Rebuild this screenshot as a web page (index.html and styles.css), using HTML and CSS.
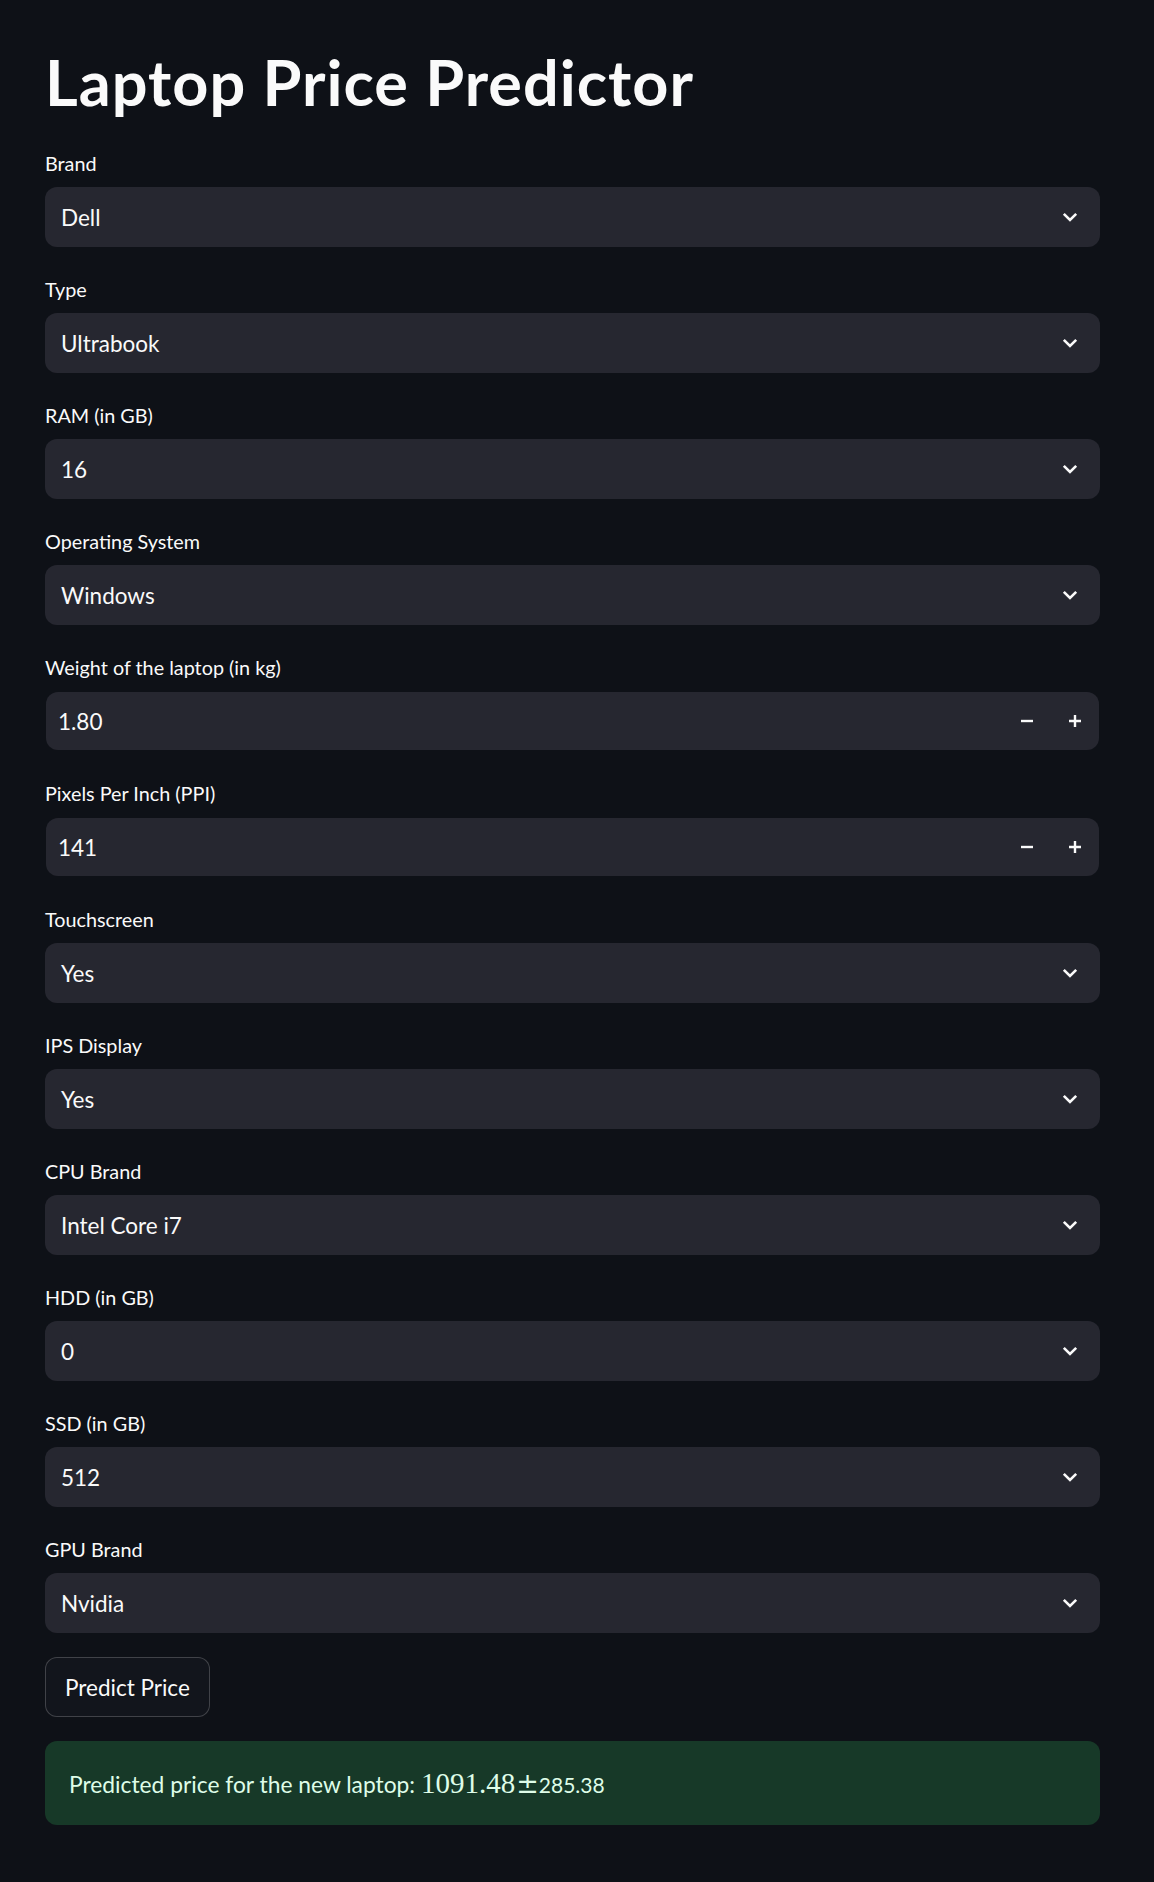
FILE: index.html
```html
<!DOCTYPE html>
<html lang="en">
<head>
<meta charset="utf-8">
<title>Laptop Price Predictor</title>
<link rel="stylesheet" href="styles.css">
</head>
<body>
<main class="main">
  <h1 class="title">Laptop Price Predictor</h1>

  <div class="widget">
    <label class="label">Brand</label>
    <div class="select"><span class="value">Dell</span><svg class="chev" width="16" height="10" viewBox="0 0 16 10"><path d="M1.8 1.8 L8 8 L14.2 1.8"/></svg></div>
  </div>

  <div class="widget">
    <label class="label">Type</label>
    <div class="select"><span class="value">Ultrabook</span><svg class="chev" width="16" height="10" viewBox="0 0 16 10"><path d="M1.8 1.8 L8 8 L14.2 1.8"/></svg></div>
  </div>

  <div class="widget">
    <label class="label">RAM (in GB)</label>
    <div class="select"><span class="value">16</span><svg class="chev" width="16" height="10" viewBox="0 0 16 10"><path d="M1.8 1.8 L8 8 L14.2 1.8"/></svg></div>
  </div>

  <div class="widget">
    <label class="label">Operating System</label>
    <div class="select"><span class="value">Windows</span><svg class="chev" width="16" height="10" viewBox="0 0 16 10"><path d="M1.8 1.8 L8 8 L14.2 1.8"/></svg></div>
  </div>

  <div class="widget">
    <label class="label">Weight of the laptop (in kg)</label>
    <div class="number">
      <span class="value num-value">1.80</span>
      <span class="step"><svg width="14" height="14" viewBox="0 0 14 14"><path d="M1 7 H13"/></svg></span>
      <span class="step"><svg width="14" height="14" viewBox="0 0 14 14"><path d="M1 7 H13 M7 1 V13"/></svg></span>
    </div>
  </div>

  <div class="widget">
    <label class="label">Pixels Per Inch (PPI)</label>
    <div class="number">
      <span class="value num-value">141</span>
      <span class="step"><svg width="14" height="14" viewBox="0 0 14 14"><path d="M1 7 H13"/></svg></span>
      <span class="step"><svg width="14" height="14" viewBox="0 0 14 14"><path d="M1 7 H13 M7 1 V13"/></svg></span>
    </div>
  </div>

  <div class="widget">
    <label class="label">Touchscreen</label>
    <div class="select"><span class="value">Yes</span><svg class="chev" width="16" height="10" viewBox="0 0 16 10"><path d="M1.8 1.8 L8 8 L14.2 1.8"/></svg></div>
  </div>

  <div class="widget">
    <label class="label">IPS Display</label>
    <div class="select"><span class="value">Yes</span><svg class="chev" width="16" height="10" viewBox="0 0 16 10"><path d="M1.8 1.8 L8 8 L14.2 1.8"/></svg></div>
  </div>

  <div class="widget">
    <label class="label">CPU Brand</label>
    <div class="select"><span class="value">Intel Core i7</span><svg class="chev" width="16" height="10" viewBox="0 0 16 10"><path d="M1.8 1.8 L8 8 L14.2 1.8"/></svg></div>
  </div>

  <div class="widget">
    <label class="label">HDD (in GB)</label>
    <div class="select"><span class="value">0</span><svg class="chev" width="16" height="10" viewBox="0 0 16 10"><path d="M1.8 1.8 L8 8 L14.2 1.8"/></svg></div>
  </div>

  <div class="widget">
    <label class="label">SSD (in GB)</label>
    <div class="select"><span class="value">512</span><svg class="chev" width="16" height="10" viewBox="0 0 16 10"><path d="M1.8 1.8 L8 8 L14.2 1.8"/></svg></div>
  </div>

  <div class="widget">
    <label class="label">GPU Brand</label>
    <div class="select"><span class="value">Nvidia</span><svg class="chev" width="16" height="10" viewBox="0 0 16 10"><path d="M1.8 1.8 L8 8 L14.2 1.8"/></svg></div>
  </div>

  <div class="widget">
    <button class="btn" type="button">Predict Price</button>
  </div>

  <div class="success">
    <p class="success-text">Predicted price for the new laptop: <span class="math">1091.48<span class="pm">±</span></span><span class="tail">285.38</span></p>
  </div>
</main>
</body>
</html>
```

FILE: styles.css
```css
html, body {
  margin: 0;
  padding: 0;
  background: #0e1117;
}

body {
  font-family: Lato, "Noto Sans", sans-serif;
  color: #fafafa;
}

.main {
  width: 1055px;
  padding: 45px 0 60px 45px;
  display: flex;
  flex-direction: column;
  gap: 24px;
}

.title {
  margin: 0 0 3px 0;
  font-size: 63px;
  line-height: 73px;
  font-weight: 700;
  letter-spacing: 1px;
  color: #fafafa;
}

.widget {
  display: flex;
  flex-direction: column;
}

.label {
  display: block;
  height: 36px;
  line-height: 36px;
  margin-bottom: 6px;
  font-size: 19.8px;
  color: #fafafa;
}

.select {
  height: 60px;
  background: #262730;
  border-radius: 12px;
  display: flex;
  align-items: center;
  justify-content: space-between;
  padding: 0 22px 0 16px;
}

.value {
  font-size: 22.5px;
  line-height: 30px;
  padding-top: 1px;
  color: #fafafa;
}

.chev path {
  fill: none;
  stroke: #fafafa;
  stroke-width: 2.6;
  stroke-linecap: butt;
  stroke-linejoin: miter;
}

.number {
  height: 58px;
  margin: 1px;
  background: #262730;
  border-radius: 12px;
  display: flex;
  align-items: center;
}

.num-value {
  flex: 1;
  padding-left: 12px;
}

.step {
  width: 48px;
  height: 100%;
  display: flex;
  align-items: center;
  justify-content: center;
}

.step path {
  fill: none;
  stroke: #fafafa;
  stroke-width: 2.4;
}

.btn {
  align-self: flex-start;
  height: 60px;
  padding: 0 19px;
  background: #12151c;
  border: 1px solid rgba(250, 250, 250, 0.2);
  border-radius: 12px;
  color: #fafafa;
  font-family: Lato, "Noto Sans", sans-serif;
  font-size: 22.5px;
}

.success {
  height: 84px;
  background: #173928;
  border-radius: 12px;
  display: flex;
  align-items: center;
  padding: 0 24px;
}

.success-text {
  margin: 0;
  color: #dffde9;
  font-size: 22.8px;
}

.math {
  font-family: "Liberation Serif", "DejaVu Serif", serif;
  font-size: 29px;
}

.pm {
  font-family: "DejaVu Serif", serif;
  font-size: 27px;
  margin-left: 1px;
}

.tail {
  font-size: 21px;
}
```
